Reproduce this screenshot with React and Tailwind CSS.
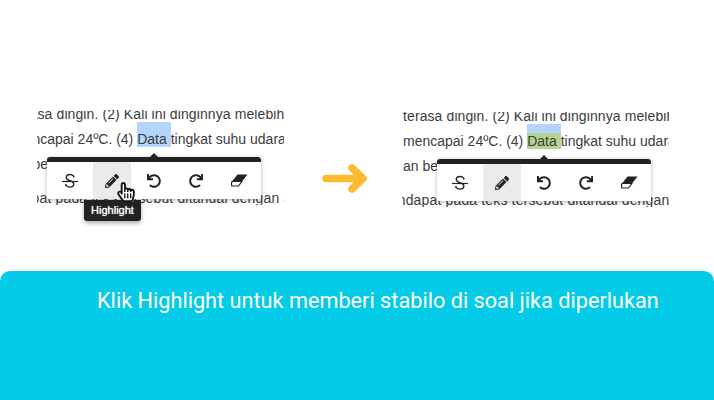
import { FaPencilAlt, FaUndo, FaRedo, FaHandPointer, FaRegHandPointer } from 'react-icons/fa';

function StrikeIcon() {
    return (
        <svg width="16" height="16" viewBox="0 0 16 16" fill="none" stroke="#222" className="block">
            <path d="M11.8 4.5V3.2C10.8 2.1 9.6 1.5 8 1.5c-2.2 0-3.7 1.1-3.7 2.9 0 1.7 1.3 2.5 3.7 3.2 2.5.8 3.8 1.6 3.8 3.4 0 1.9-1.7 3.1-3.9 3.1-1.7 0-3-.6-4-1.7v-1.5" strokeWidth="1.4" />
            <path d="M0 8.5h16" strokeWidth="1.2" />
        </svg>
    );
}

function EraserIcon() {
    return (
        <svg width="17" height="13" viewBox="0 0 17 13" className="block ml-[2px]">
            <path d="M6.5 0.5H16.5L11 7.5H1z" fill="#222" />
            <path d="M1 7.5H11L7.5 12H0.7L0.5 9z" fill="#fff" stroke="#222" strokeWidth="1.2" strokeLinejoin="round" />
        </svg>
    );
}

function Toolbar({ showTooltip }) {
    const items = [
        { key: 'strike', icon: <StrikeIcon /> },
        { key: 'pencil', icon: <FaPencilAlt size={14} color="#222" />, active: true },
        { key: 'undo', icon: <FaUndo size={14} color="#222" /> },
        { key: 'redo', icon: <FaRedo size={14} color="#222" /> },
        { key: 'eraser', icon: <EraserIcon /> },
    ];

    return (
        <div className="absolute left-[10px] top-[47px] w-[214px] bg-white shadow-[0_1px_4px_rgba(0,0,0,0.3)] rounded-b-[2px]">
            <div className="h-[5px] bg-[#222] rounded-t-[3px]" />
            <div className="absolute left-[103px] top-[-4px] w-0 h-0 border-x-[4px] border-x-transparent border-b-[4px] border-b-[#222]" />
            <div className="flex gap-1 px-1">
                {items.map((item) => (
                    <div
                        key={item.key}
                        className={`w-[38px] h-[37px] flex items-center justify-center ${item.active ? 'bg-[#ebebeb]' : ''}`}
                    >
                        {item.icon}
                    </div>
                ))}
            </div>
            {showTooltip && (
                <>
                    <div className="absolute left-[37px] top-[43px] w-[57px] h-[21px] bg-[#222] rounded-b-[3px] shadow-[0_2px_4px_rgba(0,0,0,0.35)] flex items-center justify-center text-white text-[11px] [text-shadow:0_0_1px_#fff]">
                        Highlight
                    </div>
                    <div className="absolute left-[69px] top-[25px] w-[17px] h-[20px]">
                        <FaHandPointer size={20} color="#fff" className="absolute inset-0" />
                        <FaRegHandPointer size={20} color="#111" className="absolute inset-0" />
                    </div>
                </>
            )}
        </div>
    );
}

function Passage({ highlight, shiftClass }) {
    return (
        <div className="h-[95px] overflow-hidden">
            <div className={`-mt-[8px] whitespace-nowrap text-[14px] leading-[25px] text-[#3c3c3c] ${shiftClass}`}>
                <p className="tracking-[0.1px]">terasa dingin. (2) Kali ini dinginnya melebihi batas normal air</p>
                <p>
                    mencapai 24ºC. (4){' '}
                    <span className="relative inline-block whitespace-pre">
                        <span className={`absolute inset-x-0 -top-[5px] h-[25px] ${highlight}`} />
                        <span className="relative">Data </span>
                    </span>
                    tingkat suhu udara di kota itu semakin
                </p>
                <p>an berubah</p>
                <p className="mt-[9px] -ml-[25px] tracking-[0.15px]">mendapat pada teks tersebut ditandai dengan angka</p>
            </div>
        </div>
    );
}

export default function App() {
    return (
        <div className="w-[714px] h-[400px] flex flex-col bg-white font-['Liberation_Sans',sans-serif] overflow-hidden">
            <div className="h-[271px] flex items-start pt-[110px]">
                <div className="relative ml-[37px] w-[247px]">
                    <Passage highlight="bg-[#b3d4fc]" shiftClass="-ml-[24px]" />
                    <Toolbar showTooltip />
                </div>
                <svg width="46" height="30" viewBox="0 0 46 30" className="ml-[38px] mt-[54px]" fill="none" stroke="#fdb92f" strokeWidth="7.5" strokeLinecap="round" strokeLinejoin="round">
                    <path d="M4 14.5h37M30 4l11 10.5L30 25" />
                </svg>
                <div className="relative ml-[34px] mt-[2px] w-[267px]">
                    <Passage highlight="bg-[linear-gradient(#b3d4fc_9px,#b5d48f_9px)]" shiftClass="ml-[1px]" />
                    <div className="absolute left-[25px] top-0 w-[214px]">
                        <Toolbar />
                    </div>
                </div>
            </div>
            <div className="flex-1 bg-[#04cbe8] rounded-t-[10px] pl-[97px] pt-[16px] text-white text-[21.7px] leading-[28px] font-['Roboto',sans-serif]">
                Klik Highlight untuk memberi stabilo di soal jika diperlukan
            </div>
        </div>
    );
}
